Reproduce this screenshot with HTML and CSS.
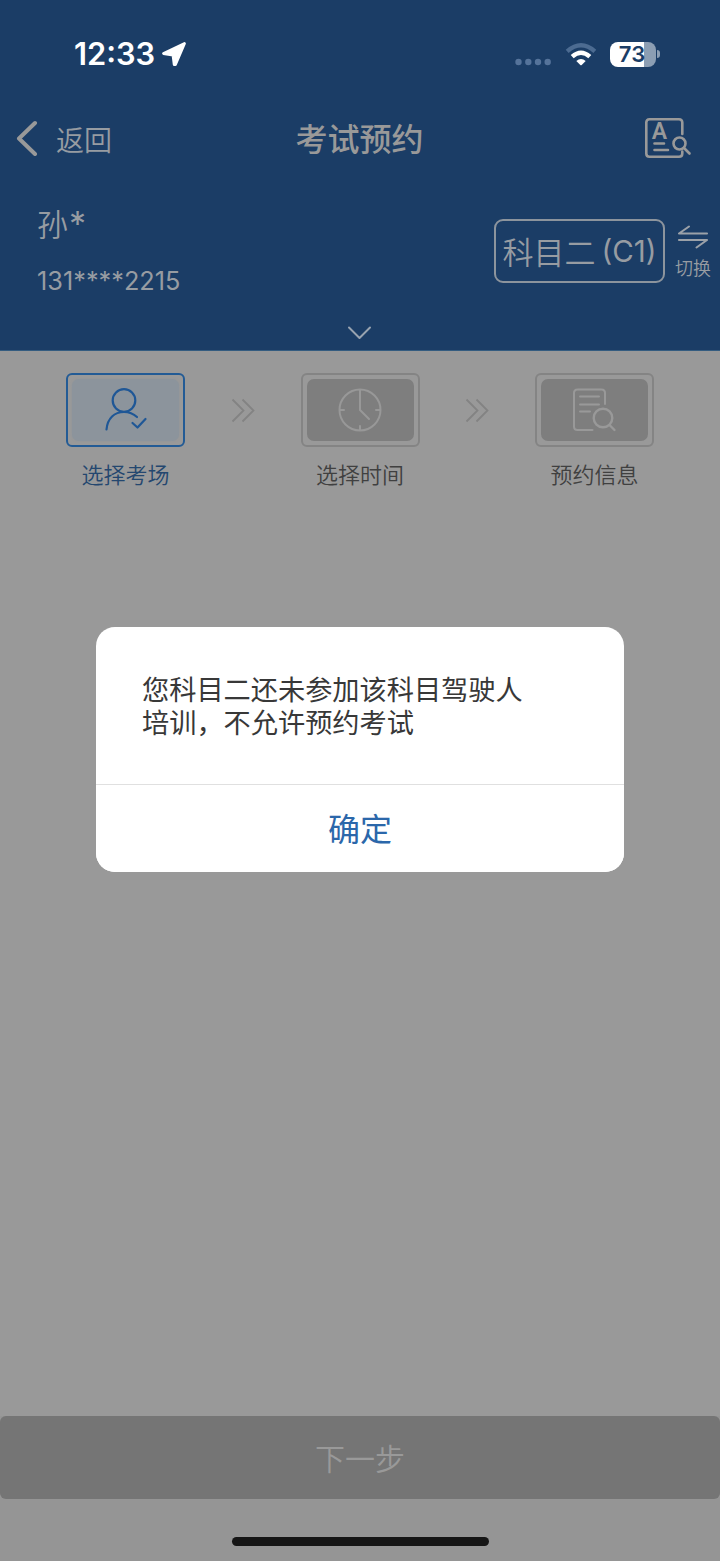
FILE: index.html
```html
<!DOCTYPE html>
<html lang="zh-CN">
<head>
<meta charset="utf-8">
<title>考试预约</title>
<link rel="stylesheet" href="styles.css">
</head>
<body>
<div class="screen">
  <header class="header">
    <div class="status">
      <div class="status-left">
        <span class="clock">12:33</span>
        <svg class="location" width="26" height="26" viewBox="0 0 26 26"><path d="M23.500 2.500 2.500 12.500 12 14 13.200 23.500H14.500Z" fill="#fff" stroke="#fff" stroke-width="2.800" stroke-linejoin="round"/></svg>
      </div>
      <div class="status-right">
        <svg class="signal" width="36" height="8" viewBox="0 0 36 8" fill="#55739a"><circle cx="3.500" cy="4" r="3.200"/><circle cx="13.300" cy="4" r="3.200"/><circle cx="23" cy="4" r="3.200"/><circle cx="32.700" cy="4" r="3.200"/></svg>
        <svg class="wifi" width="32" height="26" viewBox="0 0 32 26" fill="none" stroke-width="4.400"><path d="M2.200 10.300Q16-1.800 29.800 10.300" stroke="#4c6b91"/><path d="M7.200 15.600Q16 7.800 24.800 15.600" stroke="#fff"/><path d="M11.300 20Q16 16 20.700 20L16.700 24Q16 24.600 15.300 24Z" fill="#fff"/></svg>
        <div class="battery"><span class="level">73</span></div>
        <span class="battery-tip"></span>
      </div>
    </div>
    <nav class="nav">
      <div class="back">
        <svg width="24" height="36" viewBox="0 0 24 36" fill="none" stroke="#999" stroke-width="4" stroke-linecap="round" stroke-linejoin="round"><path d="M21 3 5 18.500 21 34"/></svg>
        <span>返回</span>
      </div>
      <h1 class="title">考试预约</h1>
      <svg class="lookup" width="48" height="42" viewBox="0 0 48 42" fill="none" stroke="#999" stroke-width="2.600" stroke-linecap="round"><path d="M38.300 17V5.500Q38.300 2.300 35 2.300H5.500Q2.300 2.300 2.300 5.500V36.500Q2.300 39.700 5.500 39.700H35Q38.300 39.700 38.300 36.500V34.500"/><path d="M10.500 26.500H20M10.500 33H24"/><circle cx="35.500" cy="26.500" r="6"/><path d="m40 31 5.500 5.500"/><text class="letter" x="7.800" y="22.300">A</text></svg>
    </nav>
    <section class="user">
      <div class="identity">
        <div class="name">孙<span class="mask">*</span></div>
        <div class="phone">131****2215</div>
      </div>
      <div class="subject">科目二<span class="licence">(C1)</span></div>
      <div class="switch">
        <svg width="32" height="26" viewBox="0 0 32 26" fill="none" stroke="#9ba1a8" stroke-width="2.100" stroke-linecap="round" stroke-linejoin="round"><path d="M30 9.500H2L12 2.500M2 16H30L19.500 23.500"/></svg>
        <span>切换</span>
      </div>
    </section>
    <svg class="expand" width="26" height="16" viewBox="0 0 26 16" fill="none" stroke="#98a3b0" stroke-width="2" stroke-linecap="round" stroke-linejoin="round"><path d="M2 2.500 12.500 13 23 2.500"/></svg>
  </header>

  <main class="main">
    <div class="steps">
      <div class="step active">
        <div class="tile"><div class="face">
          <svg width="44" height="48" viewBox="0 0 44 48" fill="none" stroke="#1f5796" stroke-width="2.200" stroke-linecap="round" stroke-linejoin="round"><circle cx="20" cy="14.500" r="11.300"/><path d="M2.500 43.500C3.500 32 10.500 26 20 26Q27.500 26 33 31"/><path d="m28.500 37 5 4.500L41.500 33"/></svg>
        </div></div>
        <span class="label">选择考场</span>
      </div>
      <svg class="chevrons" width="26" height="26" viewBox="0 0 26 26" fill="none" stroke="#838383" stroke-width="1.800"><path d="m2.500 1.500 11 11-11 11"/><path d="m12.500 1.500 11 11-11 11"/></svg>
      <div class="step">
        <div class="tile"><div class="face">
          <svg width="44" height="44" viewBox="0 0 44 44" fill="none" stroke="#989898" stroke-width="2" stroke-linecap="round"><circle cx="22" cy="22" r="20.500"/><path d="M22 2V22L31 31M22 38V42M2 22H6M38 22H42"/></svg>
        </div></div>
        <span class="label">选择时间</span>
      </div>
      <svg class="chevrons" width="26" height="26" viewBox="0 0 26 26" fill="none" stroke="#838383" stroke-width="1.800"><path d="m2.500 1.500 11 11-11 11"/><path d="m12.500 1.500 11 11-11 11"/></svg>
      <div class="step">
        <div class="tile"><div class="face">
          <svg width="44" height="44" viewBox="0 0 44 44" fill="none" stroke="#999" stroke-width="2" stroke-linecap="round"><path d="M32 16V5Q32 1.500 28.500 1.500H4.500Q1 1.500 1 5V38.500Q1 42 4.500 42H19.500M7 8.500H26M7 16.500H26M7 23.500H17"/><circle cx="30" cy="30" r="9.300" stroke-width="2.400"/><path d="m36.500 37 5 5" stroke-width="2.400"/></svg>
        </div></div>
        <span class="label">预约信息</span>
      </div>
    </div>
  </main>

  <footer class="footer">
    <button class="next">下一步</button>
    <div class="home-indicator"></div>
  </footer>

  <div class="overlay">
    <div class="dialog" role="alertdialog">
      <p class="message">您科目二还未参加该科目驾驶人培训，不允许预约考试</p>
      <button class="confirm">确定</button>
    </div>
  </div>
</div>
</body>
</html>
```
FILE: styles.css
```css
* { box-sizing: border-box; }
body {
  margin: 0;
  background: #999;
  font-family: "Noto Sans CJK SC", sans-serif;
}
svg { display: block; flex: none; }
button { border: 0; font-family: inherit; padding: 0; }

.screen {
  position: relative;
  display: flex;
  flex-direction: column;
  width: 720px;
  height: 1561px;
  overflow: hidden;
}

.header {
  display: flex;
  flex-direction: column;
  height: 351px;
  background: #1b3d66;
  border-bottom: 1px solid #345c80;
  color: #979ca2;
}

.status {
  display: flex;
  justify-content: space-between;
  height: 108px;
  padding: 40px 60px 0 74px;
}
.status-left, .status-right { display: flex; height: 28px; align-items: center; }
.clock {
  width: 87px;
  color: #fff;
  font: 600 30.8px/28px Inter, sans-serif;
  white-space: nowrap;
}
.signal { margin: 16px 14px 0 0; }
.wifi { margin-right: 13px; }
.battery {
  width: 46px;
  height: 25px;
  border-radius: 8px;
  background: linear-gradient(90deg, #fff 34px, #8c9eb3 34px);
  text-align: center;
}
.level { display: block; margin-left: -2px; color: #1b3d66; font: 600 22px/25px Inter, sans-serif; }
.battery-tip {
  width: 3px;
  height: 8px;
  margin-left: 1px;
  border-radius: 0 3px 3px 0;
  background: #8c9eb3;
}

.nav {
  display: grid;
  grid-template-columns: 1fr auto 1fr;
  align-items: center;
  height: 60px;
  padding: 0 28px 0 14px;
}
.back { display: flex; align-items: center; gap: 18px; font-size: 28px; line-height: 40px; font-weight: 350; }
.back span { padding-top: 2px; }
.title { margin: -2px -13px 0 0; font-size: 32px; line-height: 48px; font-weight: 500; color: #999; }
.lookup { justify-self: end; }
.letter { fill: #999; stroke: none; font: 600 23px Roboto, sans-serif; }

.user { display: flex; height: 152px; padding: 32px 7px 0 37px; }
.identity { flex: 1; }
.name { display: flex; height: 50px; font-size: 31px; line-height: 46px; font-weight: 350; }
.mask { margin-left: 1px; font: 400 34px/48px Inter, sans-serif; }
.phone { margin-top: 18px; font: 400 25.300px/26px Inter, sans-serif; }
.subject {
  display: flex;
  justify-content: center;
  width: 171px;
  height: 64px;
  margin-top: 19px;
  border: 2px solid #8c949d;
  border-radius: 9px;
  font-size: 31px;
  line-height: 60px;
  font-weight: 350;
}
.licence { margin-left: 6px; font: 400 29.500px/61px Inter, sans-serif; }
.switch { display: flex; flex-direction: column; align-items: center; width: 40px; margin: 24px 0 0 8px; font-size: 18px; line-height: 26px; font-weight: 350; }
.switch span { margin-top: 4px; }
.expand { align-self: center; margin-top: 5px; }

.main { flex: 1; padding: 22px 66px 0; }
.steps { display: flex; justify-content: space-between; }
.step { display: flex; flex-direction: column; align-items: center; width: 119px; color: #404040; }
.tile { width: 119px; height: 74px; padding: 4px; border: 2px solid #848484; border-radius: 6px; }
.face { display: flex; align-items: center; justify-content: center; height: 62px; border-radius: 7px; background: #7e7e7e; }
.label { margin-top: 8px; font-size: 22px; line-height: 36px; font-weight: 350; white-space: nowrap; }
.active { color: #24476f; }
.active .tile { border-color: #235b95; }
.active .face { background: #8c949c; box-shadow: 0 0 2px #8c949c; }
.chevrons { margin-top: 25px; }

.footer { height: 145px; background: #959595; }
.next {
  display: block;
  width: 720px;
  height: 83px;
  border-radius: 6px;
  background: #757575;
  color: #999;
  font-size: 30px;
  line-height: 83px;
  font-weight: 350;
}
.home-indicator { width: 257px; height: 9px; margin: 38px 0 0 232px; border-radius: 5px; background: #161616; }

.overlay { position: absolute; inset: 0; padding-top: 627px; }
.dialog { width: 528px; height: 245px; margin-left: 96px; border-radius: 19px; background: #fff; overflow: hidden; }
.message {
  height: 158px;
  margin: 0;
  padding: 45px 96px 0 46px;
  border-bottom: 1px solid #e0e0e0;
  color: #383838;
  font-size: 27.2px;
  line-height: 33px;
}
.confirm { display: block; width: 100%; height: 87px; padding-bottom: 3px; background: #fff; color: #2b67aa; font-size: 32px; line-height: 84px; }
```
